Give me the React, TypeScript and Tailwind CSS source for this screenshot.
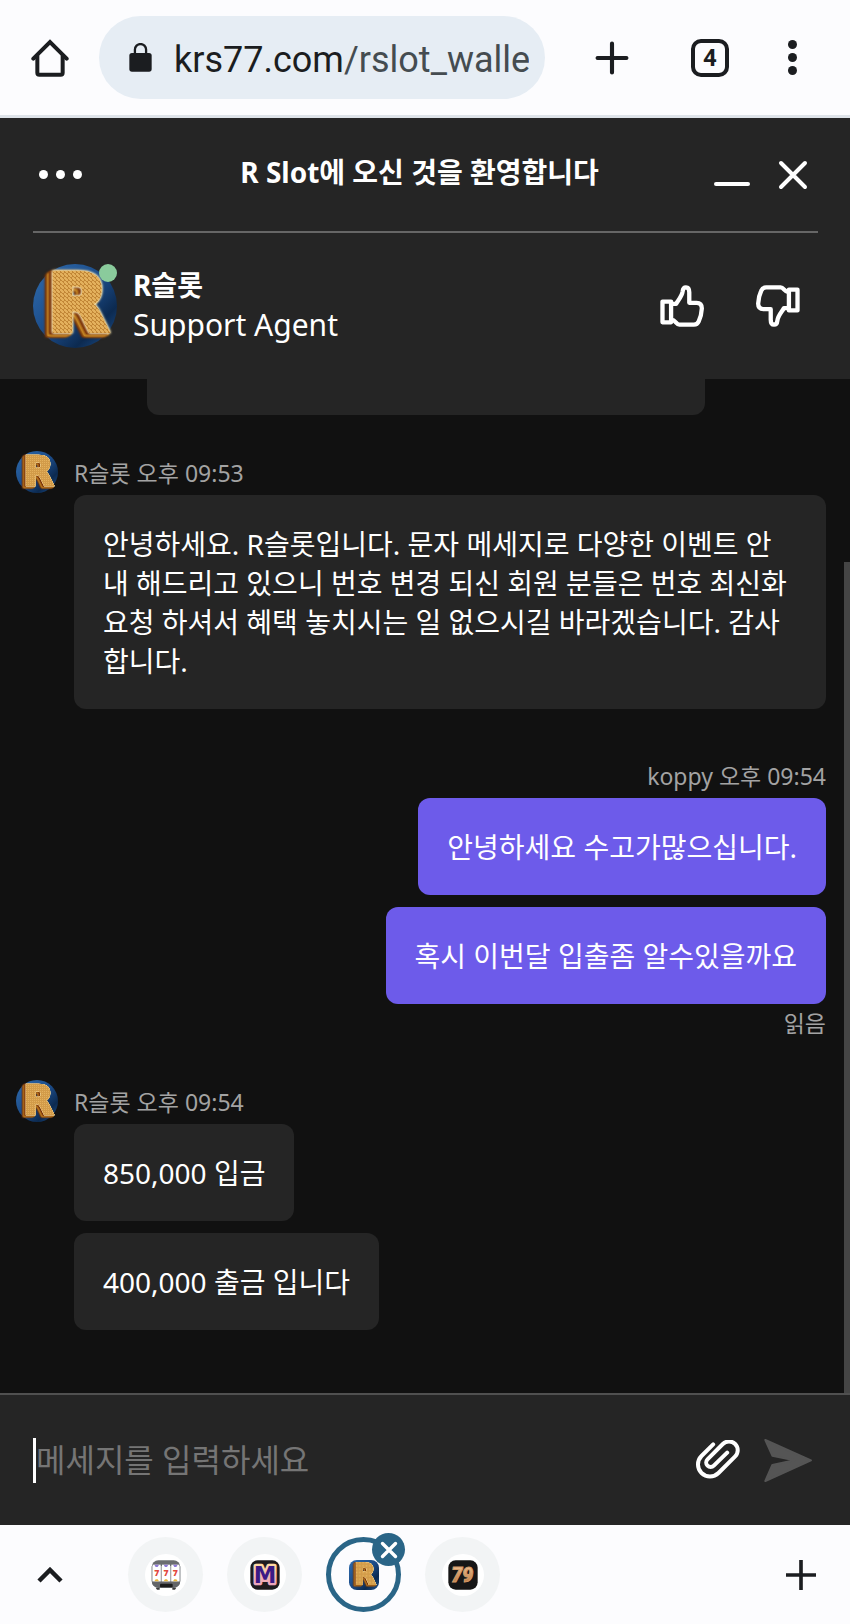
import { type ReactNode, useState } from 'react'

const FONT = 'font-["Noto_Sans","Noto_Sans_CJK_KR",sans-serif]'

// ── Drawn icons ───────────────────────────────────────────────────────

function HomeIcon() {
  return (
    <svg viewBox="0 0 114 114" className="w-[38px] h-[38px]" fill="none" stroke="#1b1d20" strokeWidth="12" strokeLinejoin="round" strokeLinecap="round">
      <path d="M7 59 57 9l50 50" strokeLinejoin="miter" />
      <path d="M19 50v51c0 4 2 6 6 6h64c4 0 6-2 6-6V50" />
    </svg>
  )
}

function LockIcon() {
  return (
    <svg viewBox="0 0 70 88" className="w-[23px] h-[29px] shrink-0" fill="none">
      <rect x="1" y="30" width="68" height="57" rx="8" fill="#1b1d20" />
      <path d="M18 34V20a17 17 0 0 1 34 0v14" stroke="#1b1d20" strokeWidth="7" />
    </svg>
  )
}

function PlusIcon({ className, round }: { className: string; round?: boolean }) {
  return (
    <svg viewBox="0 0 33 33" className={className} stroke="#1b1d20" strokeWidth="4" strokeLinecap={round ? 'round' : 'butt'}>
      <path d={round ? 'M16.5 2.5v28M2.5 16.5h28' : 'M16.5 0v33M0 16.5h33'} />
    </svg>
  )
}

function ThumbIcon({ className = '' }: { className?: string }) {
  return (
    <svg viewBox="0 0 132 127" className={`w-11 h-[42px] ${className}`} fill="none" stroke="white" strokeWidth="13" strokeLinejoin="round" strokeLinecap="round">
      <rect x="7" y="50" width="26" height="63" />
      <path d="M33 57h15c6-11 18-22 20-38 1-10 5-12 10-12 8 0 10 7 10 15v32h22c13 0 16 7 16 17-1 16-5 30-9 38-4 9-8 11-15 11H58c-10 0-10-14-25-15" />
    </svg>
  )
}

function ClipIcon() {
  return (
    <svg viewBox="0 0 134 120" className="w-[45px] h-10" fill="none" stroke="white" strokeWidth="12" strokeLinecap="round">
      <path d="M54 13 19 48a36 36 0 0 0 51 51l50-50a26 26 0 0 0-37-37L37 58a13 13 0 0 0 19 19l40-39" />
    </svg>
  )
}

function SendIcon() {
  return (
    <svg viewBox="0 0 150 135" className="w-[50px] h-[45px]" fill="#555" stroke="#555" strokeWidth="6" strokeLinejoin="round">
      <path d="M7 6 144 67 7 129l21-48 66-14-66-14Z" />
    </svg>
  )
}

// ── Brand marks ───────────────────────────────────────────────────────

function RMark({ id, className, square }: { id: string; className: string; square?: boolean }) {
  return (
    <svg viewBox="0 0 84 84" className={`overflow-visible ${className}`}>
      <defs>
        <linearGradient id={`${id}-bg`} x1="0" y1="0" x2="1" y2="1">
          <stop offset="0" stopColor="#2f6cae" />
          <stop offset="0.5" stopColor="#1b4a86" />
          <stop offset="0.75" stopColor="#0c2a50" />
          <stop offset="1" stopColor="#1f5596" />
        </linearGradient>
        <pattern id={`${id}-gold`} width="4" height="4" patternUnits="userSpaceOnUse">
          <rect width="4" height="4" fill="#e3b05c" />
          <path d="M0 0 4 4M4 0 2 2" stroke="#bd8132" strokeWidth="0.9" />
        </pattern>
      </defs>
      {square
        ? <rect width="84" height="84" rx="22" fill={`url(#${id}-bg)`} />
        : <circle cx="42" cy="42" r="42" fill={`url(#${id}-bg)`} />}
      {/* Gold face with a cream rim, extruded towards the lower left */}
      <g className="[filter:drop-shadow(0_0_1px_#fff3c0)_drop-shadow(0_0_1px_#fff3c0)_drop-shadow(-3px_1px_0_#7a3208)_drop-shadow(-2px_2px_0_#c98a25)_drop-shadow(-2px_1px_0_#6b2c08)]">
        <text
          x="45"
          y="67"
          fontSize="78"
          fontWeight="700"
          fontFamily="DejaVu Sans"
          textAnchor="middle"
          fill={`url(#${id}-gold)`}
          stroke={`url(#${id}-gold)`}
          strokeWidth="5"
        >
          R
        </text>
      </g>
    </svg>
  )
}

function SlotMark() {
  return (
    <svg viewBox="0 0 90 90" className="w-[30px] h-[30px]">
      <rect x="2" y="1" width="86" height="82" rx="20" fill="#6b6d70" />
      <rect x="2" y="18" width="86" height="46" fill="#a9abae" />
      {[5, 33, 61].map(x => (
        <g key={x}>
          <rect x={x} y="14" width="24" height="50" fill="#fff" />
          <path d={`M${x + 5} 14h14l-4 7h-6Z`} fill="#8f7ad8" />
          <path d={`M${x + 5} 64h14l-4-6h-6Z`} fill="#e8b83c" />
          <text x={x + 12} y="49" fontSize="26" fontWeight="800" fontFamily="Open Sans" fill="#e2483d" textAnchor="middle">7</text>
        </g>
      ))}
      <path d="M3 67h84c-2 11-9 16-20 16H23C12 83 5 78 3 67Z" fill="#636568" />
      <rect x="27" y="71" width="38" height="11" rx="3" fill="#1c1c1c" />
      <path d="M14 83h12v6H18ZM64 83h12l-4 6h-8Z" fill="#3a3a3a" />
    </svg>
  )
}

function MMark() {
  return (
    <svg viewBox="0 0 90 90" className="w-[30px] h-[30px]">
      <defs>
        <linearGradient id="m-edge" x1="0" y1="0" x2="0" y2="1">
          <stop offset="0" stopColor="#ffe0a0" />
          <stop offset="1" stopColor="#e79ac0" />
        </linearGradient>
      </defs>
      <rect x="1" y="1" width="88" height="88" rx="22" fill="#1d1b1e" />
      <text x="45" y="70" fontSize="68" fontWeight="700" fontFamily="DejaVu Sans" textAnchor="middle" fill="#3c1a86" stroke="url(#m-edge)" strokeWidth="14" strokeLinejoin="round" paintOrder="stroke">M</text>
    </svg>
  )
}

function SeventyNineMark() {
  return (
    <svg viewBox="0 0 90 90" className="w-[30px] h-[30px]">
      <defs>
        <linearGradient id="n-fill" x1="0" y1="0" x2="0" y2="1">
          <stop offset="0" stopColor="#f3c79a" />
          <stop offset="1" stopColor="#b06a30" />
        </linearGradient>
      </defs>
      <rect x="1" y="1" width="88" height="88" rx="22" fill="#161616" />
      <text x="43" y="66" fontSize="58" fontWeight="900" fontStyle="italic" fontFamily="Roboto" textAnchor="middle" fill="url(#n-fill)" stroke="#d39b68" strokeWidth="3">79</text>
    </svg>
  )
}

// ── Chat pieces ───────────────────────────────────────────────────────

interface Group {
  id: string
  author: string
  time: string
  mine?: boolean
  read?: boolean
  messages: string[]
}

const GROUPS: Group[] = [
  {
    id: 'g1',
    author: 'R슬롯',
    time: '오후 09:53',
    messages: [
      '안녕하세요. R슬롯입니다. 문자 메세지로 다양한 이벤트 안내 해드리고 있으니 번호 변경 되신 회원 분들은 번호 최신화 요청 하셔서 혜택 놓치시는 일 없으시길 바라겠습니다. 감사합니다.',
    ],
  },
  {
    id: 'g2',
    author: 'koppy',
    time: '오후 09:54',
    mine: true,
    read: true,
    messages: ['안녕하세요 수고가많으십니다.', '혹시 이번달 입출좀 알수있을까요'],
  },
  {
    id: 'g3',
    author: 'R슬롯',
    time: '오후 09:54',
    messages: ['850,000 입금', '400,000 출금 입니다'],
  },
]

function Bubble({ mine, children }: { mine?: boolean; children: ReactNode }) {
  return (
    <p className={`rounded-xl px-[29px] pt-[30px] pb-7 text-[28px] leading-[39px] text-white ${mine ? 'bg-[#6d5bea]' : 'bg-[#252525]'}`}>
      {children}
    </p>
  )
}

function MessageGroup({ group }: { group: Group }) {
  const meta = `${group.author} ${group.time}`

  if (group.mine) {
    return (
      <section className="flex flex-col items-end pl-[74px]">
        <div className="h-11 text-[23px] leading-[44px] text-[#a3a3a3]">{meta}</div>
        <div className="flex flex-col items-end gap-3">
          {group.messages.map(m => <Bubble key={m} mine>{m}</Bubble>)}
        </div>
        {group.read && <div className="h-[38px] text-[23px] leading-[38px] text-[#a3a3a3]">읽음</div>}
      </section>
    )
  }

  return (
    <section className="flex items-start gap-4">
      <RMark id={group.id} className="w-[42px] h-[42px] shrink-0" />
      <div className="min-w-0">
        <div className="h-11 text-[23px] leading-[44px] text-[#a3a3a3]">{meta}</div>
        <div className="flex flex-col items-start gap-3">
          {group.messages.map(m => <Bubble key={m}>{m}</Bubble>)}
        </div>
      </div>
    </section>
  )
}

function TabChip({ label, children }: { label: string; children: ReactNode }) {
  return (
    <button aria-label={label} className="w-[75px] h-[75px] rounded-full bg-[#f2f4f5] flex items-center justify-center">
      <span className="w-[42px] h-[42px] rounded-full bg-white flex items-center justify-center">{children}</span>
    </button>
  )
}

export default function App() {
  const [draft, setDraft] = useState('')

  return (
    <div className={`min-h-screen flex flex-col bg-[#111111] ${FONT}`}>
      {/* Browser bar */}
      <header className="flex items-center bg-[#fcfcfe] border-b-[3px] border-[#dee3e9] h-[118px] pl-[31px] pr-[53px]">
        <button aria-label="홈"><HomeIcon /></button>
        <button className="ml-[30px] flex-1 min-w-0 h-[83px] rounded-full bg-[#e6edf4] flex items-center pl-[30px] pr-4 text-left">
          <LockIcon />
          <span className="ml-[22px] flex-1 min-w-0 overflow-hidden whitespace-nowrap pt-1 font-[Roboto,sans-serif] text-[36px] leading-[48px] text-[#454c50]">
            <span className="text-[#1b1d20]">krs77.com</span>/rslot_walle
          </span>
        </button>
        <button aria-label="새 탭" className="ml-[50px]"><PlusIcon round className="w-[34px] h-[34px]" /></button>
        <button className="ml-[62px] w-[38px] h-[38px] rounded-[10px] border-4 border-[#1b1d20] flex items-center justify-center font-[Roboto,sans-serif] font-bold text-[24px] leading-none text-[#1b1d20]">
          4
        </button>
        <button aria-label="더보기" className="ml-[59px] flex flex-col gap-1">
          <span className="w-[9px] h-[9px] rounded-full bg-[#1b1d20]" />
          <span className="w-[9px] h-[9px] rounded-full bg-[#1b1d20]" />
          <span className="w-[9px] h-[9px] rounded-full bg-[#1b1d20]" />
        </button>
      </header>

      {/* Chat header */}
      <div className="bg-[#252525] pl-[33px] pr-8 text-white">
        <div className="flex items-center h-[115px] border-b-2 border-[#666] pl-1.5 pr-1">
          <button aria-label="메뉴" className="flex gap-2 w-[86px]">
            <span className="w-[9px] h-[9px] rounded-full bg-white" />
            <span className="w-[9px] h-[9px] rounded-full bg-white" />
            <span className="w-[9px] h-[9px] rounded-full bg-white" />
          </button>
          <h1 className="flex-1 pb-1.5 text-center text-[28px] leading-[40px] font-bold">R Slot에 오신 것을 환영합니다</h1>
          <div className="flex items-center gap-7">
            <button aria-label="최소화" className="w-9 h-[30px] flex items-end pb-1">
              <span className="block w-9 h-1 rounded-full bg-white" />
            </button>
            <button aria-label="닫기" className="mr-1.5">
              <svg viewBox="0 0 30 30" className="w-[30px] h-[30px]" stroke="white" strokeWidth="4" strokeLinecap="round">
                <path d="M3 3l24 24M27 3 3 27" />
              </svg>
            </button>
          </div>
        </div>
        <div className="flex items-center h-[146px]">
          <div className="relative shrink-0">
            <RMark id="agent" className="w-[84px] h-[84px]" />
            <span className="absolute top-0 right-0 w-[18px] h-[18px] rounded-full bg-[#8acb9c]" />
          </div>
          <div className="ml-4 pb-0.5 flex-1">
            <div className="text-[28px] leading-[40px] font-bold">R슬롯</div>
            <div className="text-[30px] leading-[40px]">Support Agent</div>
          </div>
          <div className="flex gap-[52px] pr-[18px]">
            <button aria-label="좋아요"><ThumbIcon /></button>
            <button aria-label="싫어요"><ThumbIcon className="rotate-180" /></button>
          </div>
        </div>
      </div>

      {/* Messages */}
      <main className="relative flex-1 pb-[58px]">
        <div className="ml-[147px] mr-[145px] h-9 rounded-b-xl bg-[#252525]" />
        <div className="flex flex-col pl-4 pr-6 pt-9 gap-[45px]">
          <MessageGroup group={GROUPS[0]} />
          <div className="flex flex-col gap-[38px]">
            <MessageGroup group={GROUPS[1]} />
            <MessageGroup group={GROUPS[2]} />
          </div>
        </div>
        {/* Scroll thumb */}
        <div className="absolute right-0 bottom-0 top-[18%] w-1.5 bg-[#454545]" />
      </main>

      {/* Composer */}
      <form className="flex items-center h-[132px] bg-[#252525] border-t-2 border-[#505050] pl-[33px] pr-[37px]" onSubmit={e => e.preventDefault()}>
        <span className="w-[3px] h-[45px] bg-white" />
        <input
          value={draft}
          onChange={e => setDraft(e.target.value)}
          aria-label="메세지 입력"
          placeholder="메세지를 입력하세요"
          className="flex-1 min-w-0 bg-transparent outline-none text-[32px] leading-[48px] text-white placeholder:text-[#757575]"
        />
        <button type="button" aria-label="파일 첨부"><ClipIcon /></button>
        <button type="submit" aria-label="보내기" className="ml-[23px]"><SendIcon /></button>
      </form>

      {/* Tab strip */}
      <nav className="flex items-center h-[99px] bg-[#fcfcfe] pl-[37px] pr-[34px]">
        <button aria-label="펼치기">
          <svg viewBox="0 0 26 16" className="w-[26px] h-4" fill="none" stroke="#1b1d20" strokeWidth="4.5">
            <path d="M2 14 13 3l11 11" />
          </svg>
        </button>
        <div className="ml-[65px] flex flex-1 gap-6">
          <TabChip label="777"><SlotMark /></TabChip>
          <TabChip label="M"><MMark /></TabChip>
          <div className="relative">
            <button aria-label="R Slot" className="w-[75px] h-[75px] rounded-full border-[5px] border-[#2a6587] flex items-center justify-center">
              <RMark id="tab" square className="w-[30px] h-[30px]" />
            </button>
            <button aria-label="탭 닫기" className="absolute -top-1 -right-1 w-[33px] h-[33px] rounded-full bg-[#2a6587] flex items-center justify-center">
              <svg viewBox="0 0 18 18" className="w-[18px] h-[18px]" stroke="white" strokeWidth="3.4" strokeLinecap="round">
                <path d="M2.5 2.5l13 13M15.5 2.5l-13 13" />
              </svg>
            </button>
          </div>
          <TabChip label="79"><SeventyNineMark /></TabChip>
        </div>
        <button aria-label="탭 추가"><PlusIcon className="w-[30px] h-[30px]" /></button>
      </nav>
    </div>
  )
}
